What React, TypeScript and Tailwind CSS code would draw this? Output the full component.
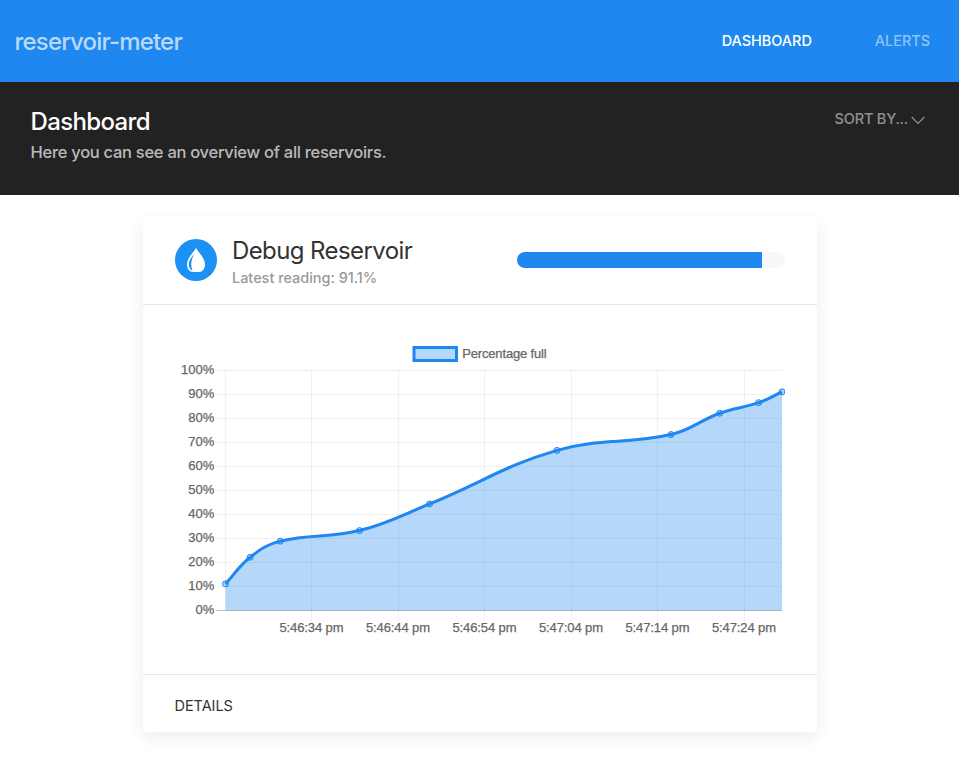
const levels = [100, 90, 80, 70, 60, 50, 40, 30, 20, 10, 0];

const ticks = [
  { x: 136.5, label: "5:46:34 pm" },
  { x: 223, label: "5:46:44 pm" },
  { x: 309.5, label: "5:46:54 pm" },
  { x: 396, label: "5:47:04 pm" },
  { x: 482.5, label: "5:47:14 pm" },
  { x: 569, label: "5:47:24 pm" },
];

type Point = { x: number; y: number };

const toY = (value: number) => 273.5 - value * 2.4;

const points: Point[] = [
  [50.5, 11.1],
  [75.2, 22.2],
  [105.3, 28.9],
  [184.5, 33.3],
  [254.6, 44.4],
  [382, 66.7],
  [496, 73.3],
  [544.7, 82.2],
  [583.6, 86.6],
  [607, 91.1],
].map(([x, value]) => ({ x, y: toY(value) }));

const distance = (a: Point, b: Point) => Math.hypot(b.x - a.x, b.y - a.y);

// Control points on either side of each reading, weighted by segment length.
const controls = points.map((current, i) => {
  const prev = points[i - 1] ?? current;
  const next = points[i + 1] ?? current;
  const before = distance(prev, current);
  const after = distance(current, next);
  const a = (0.4 * before) / (before + after);
  const b = (0.4 * after) / (before + after);
  return {
    left: { x: current.x - a * (next.x - prev.x), y: current.y - a * (next.y - prev.y) },
    right: { x: current.x + b * (next.x - prev.x), y: current.y + b * (next.y - prev.y) },
  };
});

const line = points
  .map((p, i) => {
    if (i === 0) return `M${p.x} ${p.y}`;
    const c1 = controls[i - 1].right;
    const c2 = controls[i].left;
    return `C${c1.x} ${c1.y} ${c2.x} ${c2.y} ${p.x} ${p.y}`;
  })
  .join(" ");

function Chart() {
  return (
    <svg
      width="610"
      height="305"
      viewBox="0 0 610 305"
      className="block overflow-hidden font-['Liberation_Sans',sans-serif] text-[13px]"
    >
      <g stroke="#000" strokeOpacity="0.06">
        {levels.slice(0, -1).map((v) => (
          <line key={v} x1="41" x2="607" y1={toY(v)} y2={toY(v)} />
        ))}
        <line x1="50.5" x2="50.5" y1="33" y2="274" />
        {ticks.map((t) => (
          <line key={t.x} x1={Math.floor(t.x) + 0.5} x2={Math.floor(t.x) + 0.5} y1="33" y2="284" />
        ))}
      </g>
      <line x1="41" x2="607" y1="273.5" y2="273.5" stroke="#000" strokeOpacity="0.26" />
      <path d={`${line} L607 273.5 L50.5 273.5 Z`} fill="#1e87f0" fillOpacity="0.33" />
      <path d={line} fill="none" stroke="#1e87f0" strokeWidth="3" />
      {points.map((p) => (
        <circle
          key={p.x}
          cx={p.x}
          cy={p.y}
          r="3"
          fill="#1e87f0"
          fillOpacity="0.33"
          stroke="#1e87f0"
          strokeWidth="1"
        />
      ))}
      <rect x="239" y="10.5" width="42.5" height="13" fill="#1e87f0" fillOpacity="0.33" stroke="#1e87f0" strokeWidth="3" />
      <g fill="#666" stroke="#666" strokeWidth="0.25">
        <text x="287.2" y="21" textLength="84.5">
          Percentage full
        </text>
        {levels.map((v) => (
          <text key={v} x="39.3" y={toY(v) + 3.5} textAnchor="end">
            {v}%
          </text>
        ))}
        {ticks.map((t) => (
          <text key={t.x} x={t.x} y="295" textAnchor="middle" textLength="64">
            {t.label}
          </text>
        ))}
      </g>
    </svg>
  );
}

function DropBadge() {
  return (
    <svg width="42" height="42" viewBox="0 0 42 42" className="block shrink-0">
      <circle cx="21" cy="21" r="21" fill="#1c90f3" />
      <path d="M21 9 C18 14 12 19 12 25.5 C12 29.5 14.5 33 18 33 H24 C27.5 33 30 29.5 30 25.5 C30 19 24 14 21 9Z" fill="#fff" />
      <path d="M19.5 14 C17 18 13.8 21 13.8 25.5 C13.8 28.5 15.3 31 17.5 31.6 C15 26 16.5 20 19.5 14Z" fill="#1c90f3" />
    </svg>
  );
}

export default function App() {
  return (
    <div className="h-[776px] overflow-hidden bg-white font-[Inter,sans-serif]">
      <nav className="flex h-[82px] items-center justify-between bg-[#1e87f0] pl-[14.5px] pr-[29px]">
        <a className="pt-px text-[24px] font-medium tracking-[-0.82px] text-white/70">reservoir-meter</a>
        <div className="flex gap-[63px] text-[14.5px] font-medium">
          <a className="tracking-[-0.05px] text-white">DASHBOARD</a>
          <a className="tracking-[-0.05px] text-white/50">ALERTS</a>
        </div>
      </nav>
      <header className="flex h-[113px] justify-between bg-[#222] pl-[30.5px] pr-[34px] pt-6">
        <div>
          <h1 className="text-[24px] font-medium leading-[31px] tracking-[-0.65px] text-white">Dashboard</h1>
          <p className="text-[16.5px] font-medium leading-[30px] tracking-[-0.28px] text-white/70">
            Here you can see an overview of all reservoirs.
          </p>
        </div>
        <div className="flex h-6 items-center gap-[3px] text-[14.5px] font-medium text-white/50">
          <span className="pt-0.5 tracking-[-0.2px]">SORT BY...</span>
          <svg width="14" height="9" viewBox="0 0 14 9" className="mt-1 block" fill="none" stroke="currentColor" strokeWidth="1.1">
            <path d="M0.7 1 L7 7.5 L13.3 1" />
          </svg>
        </div>
      </header>
      <main className="mx-auto mt-[22px] w-[674px] bg-white shadow-[0_5px_15px_rgba(0,0,0,0.08)]">
        <div className="flex h-[88px] items-center border-b border-[#e5e5e5] px-8 pb-px">
          <DropBadge />
          <div className="ml-[15.5px] grow pt-[3px]">
            <h2 className="text-[24px] leading-[32px] tracking-[-0.6px] text-[#333]">Debug Reservoir</h2>
            <p className="text-[14.5px] font-medium leading-[22px] tracking-[-0.03px] text-[#999]">Latest reading: 91.1%</p>
          </div>
          <div className="h-4 w-[268px] overflow-hidden rounded-full bg-[#f8f8f8]">
            <div className="h-full w-[245px] bg-[#1e87f0]" />
          </div>
        </div>
        <div className="p-8">
          <Chart />
        </div>
        <div className="flex h-[58px] items-center border-t border-[#e5e5e5] px-8 pt-1 text-[14.5px] tracking-[-0.05px] text-[#333]">
          <a>DETAILS</a>
        </div>
      </main>
    </div>
  );
}
